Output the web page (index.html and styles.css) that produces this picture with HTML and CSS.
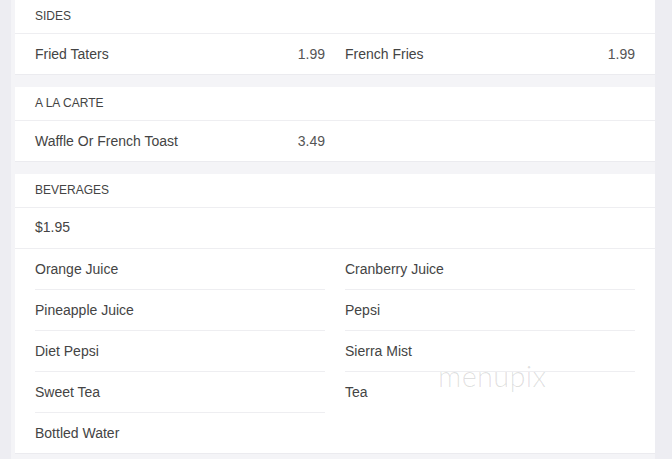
FILE: index.html
```html
<!DOCTYPE html>
<html>
<head>
<meta charset="utf-8">
<link rel="stylesheet" href="styles.css">
</head>
<body>
<div class="menu">
  <section class="card">
    <div class="card-head">SIDES</div>
    <div class="grid">
      <div class="item"><span>Fried Taters</span><span class="price">1.99</span></div>
      <div class="item"><span>French Fries</span><span class="price">1.99</span></div>
    </div>
  </section>
  <section class="card">
    <div class="card-head">A LA CARTE</div>
    <div class="grid">
      <div class="item"><span>Waffle Or French Toast</span><span class="price">3.49</span></div>
    </div>
  </section>
  <section class="card">
    <div class="card-head">BEVERAGES</div>
    <div class="note">$1.95</div>
    <div class="grid">
      <div class="item"><span>Orange Juice</span></div>
      <div class="item"><span>Cranberry Juice</span></div>
      <div class="item"><span>Pineapple Juice</span></div>
      <div class="item"><span>Pepsi</span></div>
      <div class="item"><span>Diet Pepsi</span></div>
      <div class="item"><span>Sierra Mist</span></div>
      <div class="item"><span>Sweet Tea</span></div>
      <div class="item"><span>Tea</span></div>
      <div class="item"><span>Bottled Water</span></div>
    </div>
    <div class="watermark">menupix</div>
  </section>
</div>
</body>
</html>
```
FILE: styles.css
```css
html, body {
  margin: 0;
  padding: 0;
}
body {
  background: #ededf2;
  font-family: "Liberation Sans", Arial, sans-serif;
  color: #444;
}
.menu {
  margin: 0 0 0 11px;
  padding-left: 4px;
  width: 640px;
  background: #f4f4f7;
  display: flex;
  flex-direction: column;
  gap: 12px;
  padding-bottom: 12px;
}
.card {
  position: relative;
  background: #fff;
  border-bottom: 1px solid #ebebef;
}
.card-head {
  height: 33px;
  line-height: 33px;
  padding: 0 20px;
  font-size: 12px;
  color: #444;
  border-bottom: 1px solid #eeeef1;
}
.note {
  height: 40px;
  line-height: 39px;
  padding: 0 20px;
  font-size: 14px;
  border-bottom: 1px solid #eeeef1;
}
.grid {
  display: grid;
  grid-template-columns: 1fr 1fr;
  padding: 0 10px;
}
.item {
  margin: 0 10px;
  height: 40px;
  display: flex;
  align-items: center;
  justify-content: space-between;
  font-size: 14px;
  color: #444;
}
.item:nth-child(n+3) {
  border-top: 1px solid #eeeef1;
}
.price {
  color: #555;
}
.watermark {
  position: absolute;
  left: 423px;
  top: 184px;
  font-family: Lato, "Open Sans", sans-serif;
  font-weight: 300;
  font-size: 29px;
  letter-spacing: 0.3px;
  color: rgba(0, 0, 0, 0.13);
  pointer-events: none;
}
```
